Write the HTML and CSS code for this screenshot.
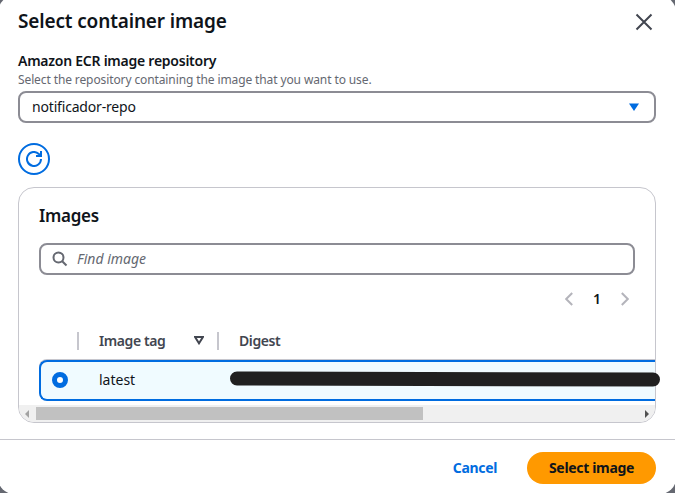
FILE: index.html
```html
<!DOCTYPE html>
<html lang="en">
<head>
<meta charset="utf-8">
<title>Select container image</title>
<link rel="stylesheet" href="styles.css">
</head>
<body>
<div class="dialog" role="dialog">
  <header class="dialog-header">
    <h1>Select container image</h1>
    <svg class="close" viewBox="0 0 18 18"><path d="M1.5 1.5l15 15M16.5 1.5l-15 15"/></svg>
  </header>
  <main class="content">
    <div class="label">Amazon ECR image repository</div>
    <div class="description">Select the repository containing the image that you want to use.</div>
    <div class="select"><span>notificador-repo</span>
      <svg class="caret" viewBox="0 0 12 9"><path d="M1 .5h10L6 8z"/></svg>
    </div>
    <div class="refresh">
      <svg viewBox="0 0 16 16"><path d="M15 8a7 7 0 1 1-2.2-5.1L14.5 4.6M15 0v5h-5"/></svg>
    </div>
    <section class="card">
      <h2>Images</h2>
      <div class="search">
        <svg viewBox="0 0 16 16"><circle cx="6.5" cy="6.5" r="5"/><path d="M10.2 10.2l4.3 4.3"/></svg>
        <span>Find image</span>
      </div>
      <div class="pagination">
        <svg viewBox="0 0 8 14"><path d="M7.2 1L1.2 7l6 6"/></svg>
        <span class="page">1</span>
        <svg viewBox="0 0 8 14"><path d="M.8 1l6 6-6 6"/></svg>
      </div>
      <div class="table">
        <div class="row head">
          <div class="cell pick"></div>
          <div class="cell tag"><span>Image tag</span>
            <svg viewBox="0 0 10 9"><path d="M1 1h8L5 7.3z"/></svg>
          </div>
          <div class="cell digest"><span>Digest</span></div>
        </div>
        <div class="row selected">
          <div class="cell pick"><i class="radio"></i></div>
          <div class="cell tag"><span>latest</span></div>
          <div class="cell digest"><i class="redaction"></i></div>
        </div>
      </div>
      <div class="scrollbar">
        <svg class="left" viewBox="0 0 4 8"><path d="M4 0v8L0 4z"/></svg>
        <div class="track"><div class="thumb"></div></div>
        <svg class="right" viewBox="0 0 4 8"><path d="M0 0v8l4-4z"/></svg>
      </div>
    </section>
  </main>
  <footer class="footer">
    <span class="cancel">Cancel</span>
    <span class="primary">Select image</span>
  </footer>
</div>
</body>
</html>
```
FILE: styles.css
```css
* { box-sizing: border-box; }
body {
  margin: 0;
  height: 493px;
  overflow: hidden;
  background: #656871;
  font-family: "Noto Sans", "Open Sans", sans-serif;
  font-size: 14px;
  line-height: 20px;
  color: #0f141a;
}
svg { display: block; fill: none; flex: none; }
span { white-space: nowrap; }
h1, h2 { margin: 0; }
.dialog {
  margin: -4px -1px 0 -2px;
  height: 498px;
  padding: 4px 1px 0 2px;
  background: #fff;
  border-radius: 16px;
}
.dialog-header {
  height: 51px;
  padding: 9px 22px 0 18px;
  display: flex;
  justify-content: space-between;
}
h1 { font-size: 19px; line-height: 25px; font-weight: 600; letter-spacing: -0.15px; }
.close { width: 18px; height: 18px; margin-top: 4px; stroke: #424650; stroke-width: 2; }
.content { height: 388px; padding: 0 19px 0 18px; }
.label { height: 20px; font-weight: 600; letter-spacing: -0.25px; }
.description { height: 20px; line-height: 17px; font-size: 12px; letter-spacing: -0.11px; color: #656871; }
.select {
  height: 32px;
  border: 2px solid #8c8c94;
  border-radius: 8px;
  padding: 0 14px 0 12px;
  display: flex;
  align-items: center;
  justify-content: space-between;
  letter-spacing: -0.18px;
}
.caret { width: 12px; height: 9px; fill: #006ce0; }
.refresh {
  width: 32px;
  height: 32px;
  margin-top: 20px;
  border: 2px solid #006ce0;
  border-radius: 50%;
  display: grid;
  place-items: center;
}
.refresh svg { width: 16px; height: 16px; stroke: #006ce0; stroke-width: 2; }
.card {
  height: 236px;
  margin-top: 12px;
  border: 1px solid #c6c6cd;
  border-radius: 16px;
  display: flex;
  flex-direction: column;
}
h2 { height: 55px; padding: 17px 0 0 20px; font-size: 17px; line-height: 21px; font-weight: 600; letter-spacing: -0.3px; }
.search {
  height: 32px;
  margin: 0 20px;
  padding-left: 11px;
  border: 2px solid #8c8c94;
  border-radius: 8px;
  display: flex;
  align-items: center;
  gap: 9px;
  color: #656871;
  font-style: italic;
}
.search svg { width: 16px; height: 16px; stroke: #656871; stroke-width: 2; }
.pagination {
  height: 48px;
  padding-right: 26px;
  display: flex;
  justify-content: flex-end;
  align-items: center;
}
.pagination svg { width: 8px; height: 14px; stroke: #b4b4bb; stroke-width: 2; }
.page { width: 48px; text-align: center; font-weight: 600; }
.table { height: 82px; padding-left: 20px; }
.row { display: grid; grid-template-columns: 40px 140px 1fr; align-items: center; }
.head { height: 37px; color: #424650; font-weight: 600; letter-spacing: -0.4px; }
.head .cell { height: 18px; display: flex; align-items: center; margin-top: -2px; }
.head .pick, .head .tag { border-right: 2px solid #c6c6cd; }
.tag { padding-left: 20px; justify-content: space-between; }
.tag svg { width: 10px; height: 9px; margin-right: 13px; stroke: #424650; stroke-width: 2; }
.digest { padding-left: 20px; }
.selected {
  height: 41px;
  padding-bottom: 1px;
  border: 2px solid #006ce0;
  border-right: 0;
  border-radius: 8px 0 0 8px;
  background: #f0fbff;
  grid-template-columns: 38px 140px 1fr;
  box-shadow: 0 -1px #c6c6cd;
}
.selected .pick { padding-left: 11px; }
.radio { display: block; width: 16px; height: 16px; border: 5px solid #006ce0; border-radius: 50%; background: #fff; }
.selected .digest { padding-left: 11px; }
.redaction {
  display: block;
  height: 14px;
  margin: -3px -5px 0 0;
  border-radius: 7px;
  background: #202020;
  transform: rotate(0.13deg);
}
.scrollbar {
  height: 17px;
  background: #f0f0f0;
  border-radius: 0 0 15px 15px;
  display: flex;
  align-items: center;
  padding: 0 6px;
}
.scrollbar svg { width: 4px; height: 8px; }
.left { fill: #a3a3a3; }
.right { fill: #505050; }
.track { flex: 1; padding-left: 7px; }
.thumb { width: 387px; height: 13px; background: #c1c1c1; }
.footer {
  height: 55px;
  border-top: 1px solid #c6c6cd;
  padding: 12px 19px 0 0;
  display: flex;
  justify-content: flex-end;
  gap: 30px;
  line-height: 32px;
  font-weight: 700;
  letter-spacing: -0.33px;
}
.cancel { color: #006ce0; }
.primary { width: 129px; height: 32px; border-radius: 16px; background: #f90; text-align: center; }
```
